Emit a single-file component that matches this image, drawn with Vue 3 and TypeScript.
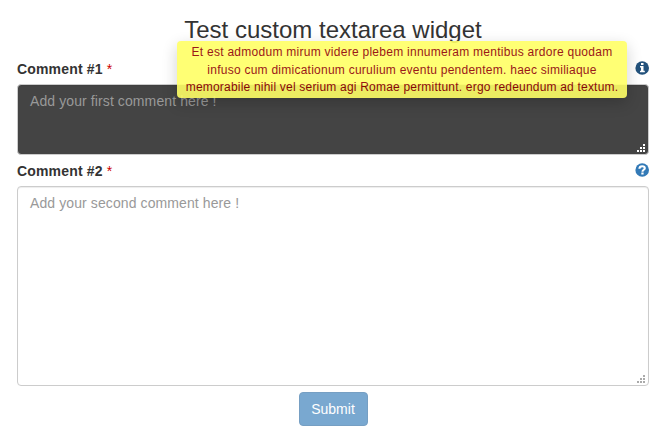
<script setup lang="ts">
import { ref } from 'vue'

interface CommentField {
  id: string
  label: string
  placeholder: string
  dark: boolean
  icon: 'info' | 'question'
  hint: string[]
}

const fields: CommentField[] = [
  {
    id: 'comment-1',
    label: 'Comment #1',
    placeholder: 'Add your first comment here !',
    dark: true,
    icon: 'info',
    hint: [
      'Et est admodum mirum videre plebem innumeram mentibus ardore quodam',
      'infuso cum dimicationum curulium eventu pendentem. haec similiaque',
      'memorabile nihil vel serium agi Romae permittunt. ergo redeundum ad textum.',
    ],
  },
  {
    id: 'comment-2',
    label: 'Comment #2',
    placeholder: 'Add your second comment here !',
    dark: false,
    icon: 'question',
    hint: [],
  },
]

const values = ref<Record<string, string>>({ 'comment-1': '', 'comment-2': '' })
const gripDots = [[6, 0], [3, 3], [6, 3], [0, 6], [3, 6], [6, 6]]
</script>

<template>
  <form class="page" @submit.prevent>
    <h3 class="title">Test custom textarea widget</h3>
    <div v-for="field in fields" :key="field.id" class="group">
      <div class="head">
        <label :for="field.id">{{ field.label }} <span class="required">*</span></label>
        <span class="help" :class="field.icon">
          <svg width="14" height="14" viewBox="0 0 14 14">
            <circle cx="7.2" cy="7" r="6.8" fill="currentColor" />
            <path v-if="field.icon === 'info'" fill="#fff" d="M6 2h2.500v2H6zM5 5h3.500v4.800h1.300v1.500H5V9.800h1V6.500H5z" />
            <template v-else>
              <path fill="none" stroke="#fff" stroke-width="2.100" d="M4.400 5.700C4.500 4 5.500 3.200 7.200 3.200c1.600 0 2.600.8 2.600 2 0 1.600-2.300 1.500-2.300 3.500" />
              <path fill="#fff" d="M6.300 9.500h2.300v2H6.300z" />
            </template>
          </svg>
          <span v-if="field.hint.length" class="tooltip" role="tooltip">
            <span v-for="(line, i) in field.hint" :key="i" class="line" :class="'line-' + i">{{ line }}</span>
          </span>
        </span>
      </div>
      <div class="control" :class="{ dark: field.dark }">
        <textarea :id="field.id" v-model="values[field.id]" :placeholder="field.placeholder"></textarea>
        <svg class="grip" width="8" height="8" viewBox="0 0 8 8" shape-rendering="crispEdges">
          <rect v-for="([x, y], i) in gripDots" :key="i" :x="x" :y="y" width="2" height="2" fill="currentColor" />
        </svg>
      </div>
    </div>
    <button class="submit" type="submit">Submit</button>
  </form>
</template>

<style>
body {
  background: #fff;
}
</style>

<style scoped>
.page,
.page * {
  box-sizing: border-box;
}
.page {
  width: 632px;
  margin-left: 17px;
  padding-top: 17px;
  display: flex;
  flex-direction: column;
  font: 14px/20px "Liberation Sans", Arial, sans-serif;
  color: #333;
}
.title {
  margin: 0 0 16px;
  font-size: 24px;
  font-weight: 400;
  line-height: 26px;
  text-align: center;
}
.group {
  margin-bottom: 6px;
}
.head {
  display: flex;
  justify-content: space-between;
  height: 25px;
}
label {
  font-weight: 700;
  letter-spacing: 0.17px;
}
.required {
  font-weight: 400;
  color: #c00;
}
.help {
  position: relative;
  width: 14px;
  height: 14px;
  margin-top: 2px;
  color: #337ab7;
}
.help.info {
  color: #23527c;
}
.help svg {
  display: block;
}
.tooltip {
  position: absolute;
  z-index: 2;
  right: 22px;
  top: -20px;
  width: 450px;
  height: 57px;
  padding: 3px 8px;
  border-radius: 4px;
  background: #ff6;
  color: #900000;
  opacity: 0.9;
  box-shadow: 0 5px 15px rgba(0, 0, 0, 0.2);
  font-size: 12px;
}
.line {
  display: flex;
  justify-content: center;
  height: 17px;
  line-height: 17px;
  white-space: nowrap;
  letter-spacing: 0.27px;
}
.line-0 {
  height: 18px;
}
.line-1 {
  letter-spacing: 0.25px;
}
.line-2 {
  letter-spacing: 0.2px;
}
.control {
  position: relative;
  height: 200px;
  color: #aaa;
}
.control.dark {
  height: 71px;
  color: #fff;
}
textarea {
  display: block;
  width: 100%;
  height: 100%;
  padding: 6px 12px;
  border: 1px solid #ccc;
  border-radius: 4px;
  box-shadow: inset 0 1px 1px rgba(0, 0, 0, 0.075);
  background: #fff;
  color: #555;
  font: inherit;
  letter-spacing: 0.1px;
  outline: 0;
  resize: none;
}
.dark textarea {
  background: #444;
  color: #fff;
}
textarea::placeholder {
  color: #999;
  opacity: 1;
}
.grip {
  position: absolute;
  right: 4px;
  bottom: 3px;
}
.submit {
  align-self: center;
  width: 69px;
  height: 34px;
  padding: 6px 0;
  border: 1px solid #2e6da4;
  border-radius: 4px;
  background: #337ab7;
  color: #fff;
  font: inherit;
  opacity: 0.65;
}
</style>
